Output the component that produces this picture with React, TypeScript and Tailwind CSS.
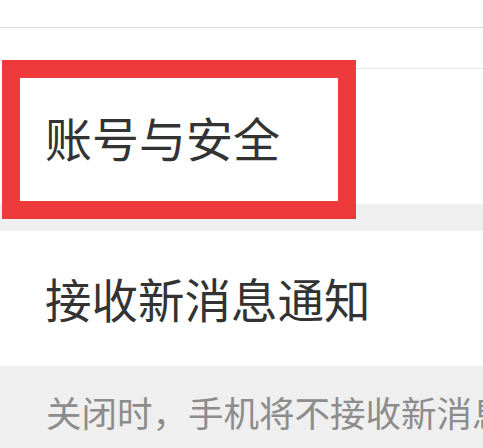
export default function App() {
  return (
    <div
      className="relative w-[483px] h-[448px] overflow-hidden bg-white"
      style={{ fontFamily: '"Noto Sans CJK SC", "Noto Sans", sans-serif' }}
    >
      {/* top blank rows */}
      <div className="h-[28px] border-b border-[#dadada]" />
      <div className="h-[41px] border-b border-[#e6e6e6]" />

      {/* Account & security row */}
      <div className="h-[135px] flex items-center pl-[45px]">
        <span className="text-[47px] leading-none text-[#333333]">账号与安全</span>
      </div>

      <div className="h-[27px] bg-[#efefef]" />

      {/* New message notification row */}
      <div className="h-[135px] flex items-center pl-[45px]">
        <span className="text-[46.5px] leading-none text-[#333333]">接收新消息通知</span>
      </div>

      {/* Hint */}
      <div className="h-[82px] bg-[#efefef] pl-[46px] pt-[28px]">
        <span className="text-[35.5px] leading-none whitespace-nowrap text-[#8c8c8c]">
          关闭时，手机将不接收新消息
        </span>
      </div>

      {/* annotation box */}
      <div className="absolute left-[2px] top-[60px] w-[354px] h-[159px] border-[18px] border-[#ee3a3a]" />
    </div>
  )
}
